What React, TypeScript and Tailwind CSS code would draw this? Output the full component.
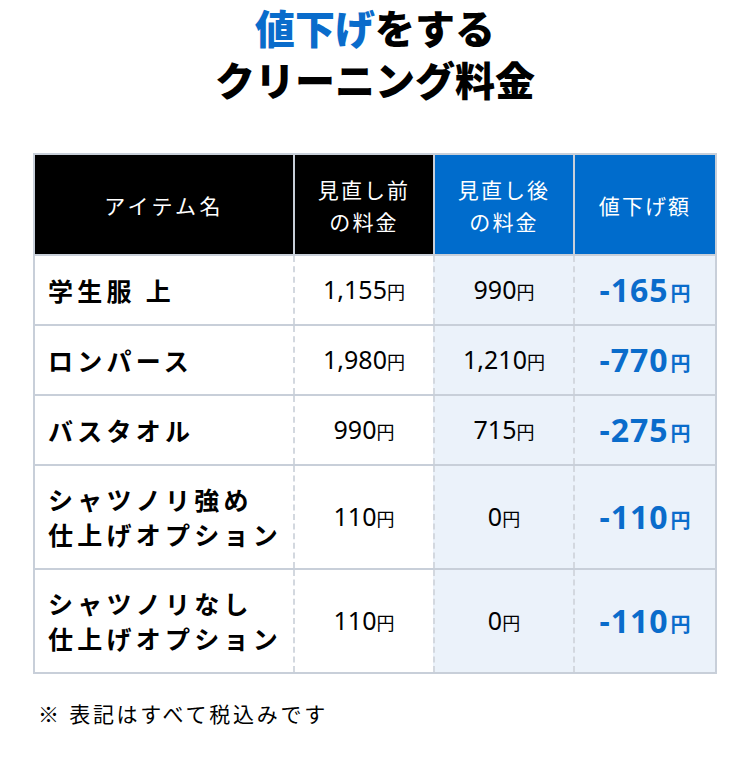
import type { ReactElement } from "react";

type PriceRowType = {
  name: string[];
  before: string;
  after: string;
  diff: string;
  tall?: boolean;
};

const rows: ReadonlyArray<PriceRowType> = [
  { name: ["学生服 上"], before: "1,155", after: "990", diff: "-165" },
  { name: ["ロンパース"], before: "1,980", after: "1,210", diff: "-770" },
  { name: ["バスタオル"], before: "990", after: "715", diff: "-275" },
  {
    name: ["シャツノリ強め", "仕上げオプション"],
    before: "110",
    after: "0",
    diff: "-110",
    tall: true,
  },
  {
    name: ["シャツノリなし", "仕上げオプション"],
    before: "110",
    after: "0",
    diff: "-110",
    tall: true,
  },
];

const Yen = ({ value }: { value: string }): ReactElement => (
  <span className="text-black">
    <span className="font-['Noto_Sans',sans-serif] text-[25px]">{value}</span>
    <span className="text-[18px]">円</span>
  </span>
);

export default function App(): ReactElement {
  return (
    <div
      className="w-[750px] bg-white pb-10"
      style={{ fontFamily: '"Noto Sans CJK JP", "Noto Sans", sans-serif' }}
    >
      <h1 className="pt-px text-center text-[40px] font-black leading-[52px] text-black">
        <span className="text-[#0a6ccb]">値下げ</span>をする
        <br />
        クリーニング料金
      </h1>

      <div className="mx-auto mt-[48px] w-[684px] border-2 border-[#c8cfd9]">
        {/* header */}
        <div className="grid h-[99px] grid-cols-[258px_140px_140px_142px] text-[21px] leading-[32px] tracking-[0.1em] text-white">
          <div className="flex items-center justify-center bg-black tracking-[0.16em]">
            アイテム名
          </div>
          <div className="flex items-center justify-center border-l-2 border-[#c8cfd9] bg-black text-center">
            見直し前
            <br />
            の料金
          </div>
          <div className="flex items-center justify-center border-l-2 border-[#c8cfd9] bg-[#006ccc] text-center">
            見直し後
            <br />
            の料金
          </div>
          <div className="flex items-center justify-center border-l-2 border-[#c8cfd9] bg-[#006ccc]">
            値下げ額
          </div>
        </div>

        {rows.map((row) => (
          <div
            key={row.name.join("")}
            className={`grid grid-cols-[258px_140px_140px_142px] border-t-2 border-[#c8cfd9] ${
              row.tall ? "h-[104px]" : "h-[70px]"
            }`}
          >
            <div className="flex flex-col justify-center bg-white pl-[13px] text-[25px] font-bold leading-[35px] tracking-[0.17em] text-black">
              {row.name.map((line) => (
                <span key={line}>{line}</span>
              ))}
            </div>
            <div className="flex items-center justify-center border-l-2 border-dashed border-[#d3d8df] bg-white">
              <Yen value={row.before} />
            </div>
            <div className="flex items-center justify-center border-l-2 border-dashed border-[#d3d8df] bg-[#ebf2fa]">
              <Yen value={row.after} />
            </div>
            <div className="flex items-center justify-center border-l-2 border-dashed border-[#d3d8df] bg-[#ebf2fa] text-[#0a6ccb]">
              <span className="font-['Noto_Sans',sans-serif] text-[32px] font-bold tracking-[0.03em]">
                {row.diff}
              </span>
              <span className="ml-[2px] mt-[6px] text-[20px] font-bold">円</span>
            </div>
          </div>
        ))}
      </div>

      <p className="ml-[38px] mt-[24px] text-[21px] tracking-[0.13em] text-black">
        ※ 表記はすべて税込みです
      </p>
    </div>
  );
}
